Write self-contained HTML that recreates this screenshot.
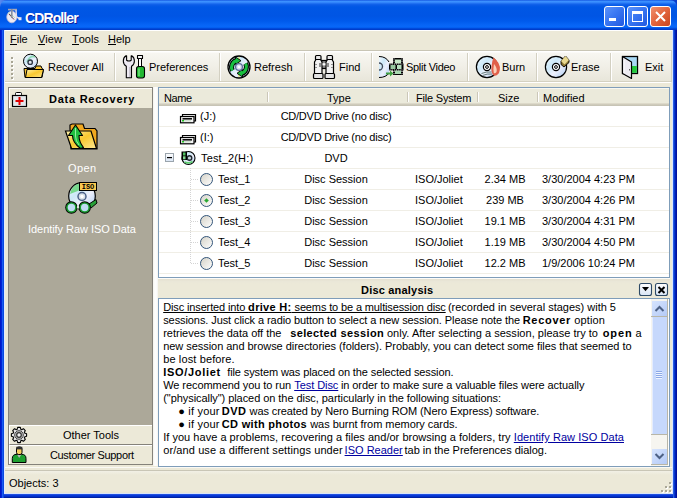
<!DOCTYPE html>
<html><head><meta charset="utf-8">
<style>
*{box-sizing:border-box}
html,body{margin:0;padding:0}
body{width:677px;height:498px;overflow:hidden;position:relative;background:#ECE9D8;font-family:"Liberation Sans",sans-serif;font-size:11px;color:#000;-webkit-font-smoothing:antialiased}
.a{position:absolute;white-space:nowrap}
#title{left:0;top:0;width:677px;height:30px;border-radius:7px 7px 0 0;
background:linear-gradient(to bottom,#0A46D9 0px,#3D93FF 1px,#3A8EFE 2px,#2A7BF6 3px,#1566EC 4px,#0B5CE8 5px,#0057E5 7px,#0055E4 16px,#005AEC 21px,#0765F6 25px,#0867F8 27px,#0058EA 28px,#003CCB 29px,#003CCB 30px)}
#fl{left:0;top:30px;width:5px;height:468px;background:linear-gradient(to right,#0018C8 0,#0018C8 1px,#0024D8 1px,#0024D8 2px,#1A5CF0 2px,#1A5CF0 3px,#0A48E0 3px,#0A48E0 4px,#E0EAFF 4px,#E0EAFF 5px)}
#fr{left:672px;top:30px;width:5px;height:468px;background:linear-gradient(to right,#D8E4FF 0,#D8E4FF 1px,#2A5CE0 1px,#2A5CE0 2px,#0838D0 2px,#0838D0 3px,#0020B0 3px,#0020B0 4px,#0010A0 4px)}
#fb{left:4px;top:493px;width:669px;height:5px;background:linear-gradient(to bottom,#D8E4F8 0,#D8E4F8 1px,#2050E0 1px,#2050E0 2px,#0838D8 2px,#0838D8 3px,#0030C8 3px,#0030C8 4px,#0020A0 4px)}
#fb2{left:0;top:494px;width:677px;height:4px;background:linear-gradient(to bottom,#2050E0 0,#2050E0 1px,#0838D8 1px,#0838D8 2px,#0030C8 2px,#0030C8 3px,#0020A0 3px)}
#corner{left:0;top:0;width:677px;height:10px;background:linear-gradient(to right,#5A8AF0 0,#2A62E0 8px,#0A46D9 16px,#0A46D9 660px,#0A3CC8 677px)}
.tt{left:25px;top:10px;color:#fff;font-weight:bold;font-size:14px;letter-spacing:-0.9px;text-shadow:1px 1px 0 #0A1FA0}
.tbtn{top:6px;width:21px;height:21px;border:1px solid #fff;border-radius:3px;background:linear-gradient(135deg,#5C93FA 0%,#3A77F2 45%,#2158E0 100%)}
.tbtn.x{background:linear-gradient(135deg,#F0906E 0%,#E2643D 50%,#C8451F 100%)}
#menu{left:4px;top:30px;width:669px;height:20px;border-top:1px solid #fff;background:#ECE9D8}
.m{top:33px}
.m u{text-decoration:none;border-bottom:1px solid #000;display:inline-block;line-height:9px;height:10px}
#tbar{left:4px;top:50px;width:668px;height:33px;border-top:1px solid #C8C5B5;background:linear-gradient(to bottom,#FFFFFF 0,#FFFFFF 1px,#F7F6F1 2px,#F1EFE7 50%,#E8E6DA 97%,#D4D1C1 97%);border-bottom:1px solid #FFFFFF;border-right:1px solid #D4D1C1}
.sep{top:53px;width:2px;height:28px;border-left:1px solid #D3D0C2;border-right:1px solid #FFFFFF}
.tl{top:61px}
#lp{left:8px;top:87px;width:145px;height:378px;border:1px solid #85827A;background:#ACA899}
.lph{left:9px;top:88px;width:143px;height:20px;background:#ECE9D8;border-top:1px solid #fff;border-left:1px solid #fff}
.lbar{width:143px;height:19px;background:#ECE9D8;border-top:1px solid #fff;border-left:1px solid #fff;left:9px}
.lt{color:#fff}
#split{left:153px;top:87px;width:5px;height:379px;background:linear-gradient(to right,#F3F2EA 0,#FBFBF8 1px,#FFFFFF 3px,#F4F3EE 5px)}
#lv{left:158px;top:87px;width:512px;height:191px;border:1px solid #7F9DB9;background:#fff}
.hdr{left:159px;top:88px;width:510px;height:18px;background:linear-gradient(to bottom,#F8F7F0 0,#F8F7F0 1px,#EBEADB 1px,#EBEADB 15px,#E3E0D0 15px,#D6D2C2 16px,#C7C4B5 17px)}
.hs{top:92px;width:2px;height:10px;border-left:1px solid #CBC7B8;border-right:1px solid #fff}
.rl{left:159px;width:510px;height:1px;background:#F0EEE6}
#ph{left:158px;top:278px;width:512px;height:20px;background:linear-gradient(to bottom,#FCFBF8 0,#FCFBF8 1px,#E6E2D2 1px,#E6E2D2 2px,#EAE7D8 3px,#ECE9D8 6px,#ECE9D8 100%)}
#tx{left:158px;top:298px;width:512px;height:169px;border:1px solid #7F9DB9;background:#fff}
.pt{left:164px;line-height:13px}
.pt a{color:#0000A0;text-decoration:underline}
.pt b{letter-spacing:0.45px}
#sb{left:651px;top:299px;width:17px;height:167px;background:#FDFDFB;border-left:1px solid #EEEDE5}
#status{left:4px;top:470px;width:669px;height:24px;border-top:1px solid #C9C6B6;background:linear-gradient(to bottom,#F2F0E6 0,#ECE9D8 4px,#ECE9D8 20px,#E4E1D1 23px)}
#wl{left:5px;top:467px;width:667px;height:1px;background:#FAF9F4}
</style></head><body>
<div id="corner" class="a"></div>
<div id="title" class="a"></div>
<div class="a tt">CDRoller</div>
<div class="a tbtn" style="left:604px"></div>
<div class="a tbtn" style="left:627px"></div>
<div class="a tbtn x" style="left:650px"></div>


<div id="menu" class="a"></div>
<div class="a m" style="left:10px"><u>F</u>ile</div>
<div class="a m" style="left:38px"><u>V</u>iew</div>
<div class="a m" style="left:72px"><u>T</u>ools</div>
<div class="a m" style="left:108px"><u>H</u>elp</div>

<div id="tbar" class="a"></div>
<div class="a sep" style="left:114px"></div>
<div class="a sep" style="left:219px"></div>
<div class="a sep" style="left:304px"></div>
<div class="a sep" style="left:371px"></div>
<div class="a sep" style="left:467px"></div>
<div class="a sep" style="left:536px"></div>
<div class="a sep" style="left:610px"></div>
<div class="a tl" style="left:48px">Recover All</div>
<div class="a tl" style="left:149px">Preferences</div>
<div class="a tl" style="left:254px">Refresh</div>
<div class="a tl" style="left:339px">Find</div>
<div class="a tl" style="left:406px;letter-spacing:-0.3px">Split Video</div>
<div class="a tl" style="left:502px">Burn</div>
<div class="a tl" style="left:571px">Erase</div>
<div class="a tl" style="left:645px">Exit</div>

<div id="lp" class="a"></div>
<div class="a lph"></div>
<div class="a" style="left:49px;top:93px;font-weight:bold;letter-spacing:0.75px">Data Recovery</div>
<div class="a lt" style="left:68px;top:162px;letter-spacing:0.4px">Open</div>
<div class="a lt" style="left:28px;top:223px;letter-spacing:-0.05px">Identify Raw ISO Data</div>
<div class="a lbar" style="top:425px;border-bottom:1px solid #85827A;height:20px"></div>
<div class="a lbar" style="top:445px"></div>
<div class="a" style="left:63px;top:429px">Other Tools</div>
<div class="a" style="left:50px;top:449px;letter-spacing:-0.35px">Customer Support</div>

<div id="split" class="a"></div>
<div id="lv" class="a"></div>
<div class="a hdr"></div>
<div class="a" style="left:164px;top:92px;letter-spacing:-0.4px">Name</div>
<div class="a" style="left:327px;top:92px">Type</div>
<div class="a" style="left:416px;top:92px;letter-spacing:-0.2px">File System</div>
<div class="a" style="left:498px;top:92px">Size</div>
<div class="a" style="left:543px;top:92px">Modified</div>
<div class="a hs" style="left:267px"></div>
<div class="a hs" style="left:407px"></div>
<div class="a hs" style="left:477px"></div>
<div class="a hs" style="left:537px"></div>
<div class="a" style="left:200px;top:110px">(J:)</div>
<div class="a" style="left:276px;width:120px;text-align:center;top:110px;letter-spacing:-0.25px">CD/DVD Drive (no disc)</div>
<div class="a rl" style="top:126px"></div>
<div class="a" style="left:200px;top:131px">(I:)</div>
<div class="a" style="left:276px;width:120px;text-align:center;top:131px;letter-spacing:-0.25px">CD/DVD Drive (no disc)</div>
<div class="a rl" style="top:147px"></div>
<div class="a" style="left:201px;top:152px;letter-spacing:0.15px">Test_2(H:)</div>
<div class="a" style="left:276px;width:120px;text-align:center;top:152px">DVD</div>
<div class="a rl" style="top:168px"></div>
<div class="a" style="left:218px;top:173px">Test_1</div>
<div class="a" style="left:276px;width:120px;text-align:center;top:173px">Disc Session</div>
<div class="a" style="left:415px;top:173px">ISO/Joliet</div>
<div class="a" style="left:465px;width:80px;text-align:center;top:173px">2.34 MB</div>
<div class="a" style="left:542px;top:173px">3/30/2004 4:23 PM</div>
<div class="a rl" style="top:189px"></div>
<div class="a" style="left:218px;top:194px">Test_2</div>
<div class="a" style="left:276px;width:120px;text-align:center;top:194px">Disc Session</div>
<div class="a" style="left:415px;top:194px">ISO/Joliet</div>
<div class="a" style="left:465px;width:80px;text-align:center;top:194px">239 MB</div>
<div class="a" style="left:542px;top:194px">3/30/2004 4:26 PM</div>
<div class="a rl" style="top:210px"></div>
<div class="a" style="left:218px;top:215px">Test_3</div>
<div class="a" style="left:276px;width:120px;text-align:center;top:215px">Disc Session</div>
<div class="a" style="left:415px;top:215px">ISO/Joliet</div>
<div class="a" style="left:465px;width:80px;text-align:center;top:215px">19.1 MB</div>
<div class="a" style="left:542px;top:215px">3/30/2004 4:31 PM</div>
<div class="a rl" style="top:231px"></div>
<div class="a" style="left:218px;top:236px">Test_4</div>
<div class="a" style="left:276px;width:120px;text-align:center;top:236px">Disc Session</div>
<div class="a" style="left:415px;top:236px">ISO/Joliet</div>
<div class="a" style="left:465px;width:80px;text-align:center;top:236px">1.19 MB</div>
<div class="a" style="left:542px;top:236px">3/30/2004 4:50 PM</div>
<div class="a rl" style="top:252px"></div>
<div class="a" style="left:218px;top:257px">Test_5</div>
<div class="a" style="left:276px;width:120px;text-align:center;top:257px">Disc Session</div>
<div class="a" style="left:415px;top:257px">ISO/Joliet</div>
<div class="a" style="left:465px;width:80px;text-align:center;top:257px">12.2 MB</div>
<div class="a" style="left:542px;top:257px">1/9/2006 10:24 PM</div>
<div class="a rl" style="top:273px"></div>
<div id="ph" class="a"></div>
<div class="a" style="left:361px;top:284px;font-weight:bold;letter-spacing:0.2px">Disc analysis</div>
<div id="tx" class="a"></div>
<div id="sb" class="a"></div>
<div class="a pt" style="top:301px;left:163.2px;letter-spacing:-0.133px"><u>Disc inserted into <b style="letter-spacing:0.317px">drive H:</b> seems to be a multisession disc</u></div>
<div class="a pt" style="top:301px;left:447.9px;letter-spacing:-0.001px">(recorded in several stages) with 5</div>
<div class="a pt" style="top:314px;left:163.2px;letter-spacing:-0.084px">sessions. Just click a radio button to select a new session. Please note the</div>
<div class="a pt" style="top:314px;left:522.7px;letter-spacing:0.248px"><b style="letter-spacing:0.698px">Recover</b></div>
<div class="a pt" style="top:314px;left:574.2px;letter-spacing:0.138px">option</div>
<div class="a pt" style="top:327px;left:163.2px;letter-spacing:-0.005px">retrieves the data off the</div>
<div class="a pt" style="top:327px;left:290.2px;letter-spacing:-0.078px"><b style="letter-spacing:0.372px">selected session</b></div>
<div class="a pt" style="top:327px;left:386.9px;letter-spacing:0.021px">only. After selecting a session, please try to</div>
<div class="a pt" style="top:327px;left:602.7px;letter-spacing:0.434px"><b style="letter-spacing:0.884px">open</b></div>
<div class="a pt" style="top:327px;left:635.5px;letter-spacing:0.328px">a</div>
<div class="a pt" style="top:340px;left:163.2px;letter-spacing:-0.043px">new session and browse directories (folders). Probably, you can detect some files that seemed to</div>
<div class="a pt" style="top:353px;left:163.2px;letter-spacing:0.126px">be lost before.</div>
<div class="a pt" style="top:366px;left:163.2px;letter-spacing:0.256px"><b style="letter-spacing:0.706px">ISO/Joliet</b></div>
<div class="a pt" style="top:366px;left:227.2px;letter-spacing:-0.104px">file system was placed on the selected session.</div>
<div class="a pt" style="top:379px;left:163.2px;letter-spacing:-0.07px">We recommend you to run</div>
<div class="a pt" style="top:379px;left:294.2px;letter-spacing:-0.057px"><a>Test Disc</a></div>
<div class="a pt" style="top:379px;left:340.9px;letter-spacing:-0.069px">in order to make sure a valuable files were actually</div>
<div class="a pt" style="top:392px;left:163.2px;letter-spacing:-0.059px">("physically") placed on the disc, particularly in the following situations:</div>
<div class="a pt" style="top:405px;left:178.2px;letter-spacing:0.205px">&#9679; if your</div>
<div class="a pt" style="top:405px;left:221.8px;letter-spacing:-0.026px"><b style="letter-spacing:0.424px">DVD</b></div>
<div class="a pt" style="top:405px;left:249.6px;letter-spacing:-0.1px">was created by Nero Burning ROM (Nero Express) software.</div>
<div class="a pt" style="top:418px;left:178.2px;letter-spacing:0.205px">&#9679; if your</div>
<div class="a pt" style="top:418px;left:221.8px;letter-spacing:-0.133px"><b style="letter-spacing:0.317px">CD with photos</b></div>
<div class="a pt" style="top:418px;left:310.2px;letter-spacing:-0.044px">was burnt from memory cards.</div>
<div class="a pt" style="top:431px;left:163.2px;letter-spacing:0.027px">If you have a problems, recovering a files and/or browsing a folders, try</div>
<div class="a pt" style="top:431px;left:513.8px;letter-spacing:0.065px"><a>Identify Raw ISO Data</a></div>
<div class="a pt" style="top:444px;left:163.2px;letter-spacing:0.1px">or/and use a different settings under</div>
<div class="a pt" style="top:444px;left:344.6px;letter-spacing:0.011px"><a>ISO Reader</a></div>
<div class="a pt" style="top:444px;left:404.5px;letter-spacing:-0.02px">tab in the Preferences dialog.</div>
<div id="wl" class="a"></div>
<div id="status" class="a"></div>
<div class="a" style="left:9px;top:477px">Objects: 3</div>
<div id="fb2" class="a"></div><div id="fl" class="a"></div><div id="fr" class="a"></div><div id="fb" class="a"></div>
<svg class="a" style="left:0;top:0" width="677" height="498" viewBox="0 0 677 498">
<defs>
<linearGradient id="cdg" x1="0" y1="0" x2="1" y2="1">
<stop offset="0" stop-color="#F4FAFF"/><stop offset="0.35" stop-color="#CCE8F8"/><stop offset="0.6" stop-color="#EEF0FC"/><stop offset="1" stop-color="#A4C8F0"/>
</linearGradient>
<linearGradient id="fold" x1="0" y1="0" x2="1" y2="1">
<stop offset="0" stop-color="#FFF4B0"/><stop offset="0.5" stop-color="#F8C830"/><stop offset="1" stop-color="#FFE890"/>
</linearGradient>
<linearGradient id="btnb" x1="0" y1="0" x2="0" y2="1">
<stop offset="0" stop-color="#FFFFFF"/><stop offset="1" stop-color="#D8E4F4"/>
</linearGradient>
<linearGradient id="sbb" x1="0" y1="0" x2="1" y2="1">
<stop offset="0" stop-color="#D6E4FE"/><stop offset="1" stop-color="#B4CAF6"/>
</linearGradient>
<linearGradient id="rad" x1="0" y1="0" x2="1" y2="1">
<stop offset="0" stop-color="#D4D1C6"/><stop offset="1" stop-color="#FFFFFF"/>
</linearGradient>
</defs>
<!-- title icon -->
<g>
<ellipse cx="11.8" cy="17" rx="5" ry="5.8" fill="#EEEAF2" stroke="#C8C0D8" stroke-width="0.8"/>
<path d="M8 12.5 Q10 15 12 15 L15 18" stroke="#C0E0C0" stroke-width="1" fill="none"/>
<path d="M9 14 L14 19.5" stroke="#703848" stroke-width="1"/>
<rect x="8" y="8.8" width="9" height="1.6" fill="#A8A8B8"/>
<rect x="11" y="9" width="1.6" height="9" fill="#8890A0"/>
<path d="M16 10 L16.5 17 L19.5 18.5" stroke="#E0DAE8" stroke-width="1.4" fill="none"/>
<rect x="18.5" y="17.2" width="3" height="3" fill="#E8E8F4"/>
</g>
<!-- title buttons glyphs -->
<rect x="609" y="18" width="7" height="3" fill="#fff"/>
<rect x="632.5" y="11.5" width="10" height="10" fill="none" stroke="#fff" stroke-width="1"/>
<rect x="632" y="11" width="11" height="3" fill="#fff"/>
<path d="M656 12 L665 21 M665 12 L656 21" stroke="#fff" stroke-width="2"/>
<!-- gripper -->
<g fill="#FFFFFF"><rect x="12" y="58" width="2" height="2"/><rect x="12" y="62" width="2" height="2"/><rect x="12" y="66" width="2" height="2"/><rect x="12" y="70" width="2" height="2"/><rect x="12" y="74" width="2" height="2"/><rect x="12" y="78" width="2" height="2"/></g>
<g fill="#A8A594"><rect x="11" y="57" width="2" height="2"/><rect x="11" y="61" width="2" height="2"/><rect x="11" y="65" width="2" height="2"/><rect x="11" y="69" width="2" height="2"/><rect x="11" y="73" width="2" height="2"/><rect x="11" y="77" width="2" height="2"/></g>

<!-- Recover All -->
<g stroke="#000" stroke-width="1">
<circle cx="30.5" cy="61.2" r="7" fill="url(#cdg)"/>
<path d="M27 62 Q30 55 35 57" stroke="#60D080" stroke-width="1.5" fill="none" opacity="0.6"/>
<circle cx="30.2" cy="62.2" r="2.2" fill="#E0E8F0" stroke="#303848" stroke-width="1.4"/>
<path d="M24 68.5 L35 68.5 L36 66 L41 66 L42 68.5 L43.5 69.5 L42 77.5 L25 77.5 Z" fill="#F6C030"/>
<path d="M27 69.5 L43.5 69.5 L41.5 77.5 L25.5 77.5 Z" fill="url(#fold)"/>
</g>
<!-- Preferences -->
<g stroke="#000" stroke-width="1.1" stroke-linejoin="round">
<path d="M126 55.8 Q123.3 57.5 123.3 61 Q123.3 64.5 126.3 66.3 L126.3 77.8 L131.5 77.8 L131.5 66.3 Q134.4 64.5 134.4 61 Q134.4 57.5 131.7 55.8 L131.2 55.8 L131.2 60.2 Q128.9 61.8 126.6 60.2 L126.6 55.8 Z" fill="#EEEAF2"/>
<path d="M130 67 L130 77" stroke="#B0A8B8" stroke-width="1.1"/>
<rect x="137.5" y="55.5" width="5" height="3" fill="#F4F4F4"/>
<rect x="138.5" y="58.5" width="3" height="8" fill="#FFFFFF" stroke-width="1"/>
<rect x="136.5" y="66.5" width="8" height="11.5" rx="2.2" fill="#22B832"/>
<path d="M139 68.5 L139 76" stroke="#80E888" stroke-width="1.2"/>
</g>
<!-- Refresh -->
<g>
<circle cx="239" cy="67" r="11" fill="url(#cdg)" stroke="#000" stroke-width="1.3"/>
<path d="M238.3 57 L239.7 57 L239.7 77 L238.3 77 Z" fill="#E8F070" opacity="0.9"/>
<path d="M232.4 70.5 A7 7 0 0 1 236.5 60.5" stroke="#000" stroke-width="5" fill="none"/>
<path d="M245.6 63.5 A7 7 0 0 1 241.5 73.5" stroke="#000" stroke-width="5" fill="none"/>
<path d="M235.5 57 L241 60.7 L235.5 64.5 Z" fill="#18C040" stroke="#000" stroke-width="0.9"/>
<path d="M242.5 77 L237 73.3 L242.5 69.5 Z" fill="#18C040" stroke="#000" stroke-width="0.9"/>
<path d="M232.4 70.5 A7 7 0 0 1 236.5 60.5" stroke="#18C040" stroke-width="3.2" fill="none"/>
<path d="M245.6 63.5 A7 7 0 0 1 241.5 73.5" stroke="#18C040" stroke-width="3.2" fill="none"/>
<circle cx="239" cy="67" r="3.4" fill="#D8E0F0" stroke="#5A6A98" stroke-width="1.3"/>
<circle cx="239" cy="67" r="1.3" fill="#fff"/>
</g>
<!-- Find (binoculars) -->
<g stroke="#000" stroke-width="1.2">
<rect x="320.5" y="60.5" width="7" height="8" fill="#8A8A8A"/>
<rect x="315.5" y="55.5" width="5.5" height="5" rx="1" fill="#E8E8E8"/>
<rect x="327" y="55.5" width="5.5" height="5" rx="1" fill="#E8E8E8"/>
<path d="M314.5 74 L314.5 62 L316 59.5 L320.5 59.5 L322 62 L322 74 Z" fill="#F2F2F2"/>
<path d="M326 74 L326 62 L327.5 59.5 L332 59.5 L333.5 62 L333.5 74 Z" fill="#F2F2F2"/>
<rect x="313.5" y="73.5" width="9.5" height="5" rx="1" fill="#E4E4E4"/>
<rect x="325" y="73.5" width="9.5" height="5" rx="1" fill="#E4E4E4"/>
</g>
<rect x="322.5" y="63.2" width="3" height="2.2" fill="#FFFFFF"/>
<g fill="#909090"><rect x="315" y="64" width="2" height="1"/><rect x="315" y="67" width="2" height="1"/><rect x="331" y="64" width="2" height="1"/><rect x="331" y="67" width="2" height="1"/><rect x="319" y="63" width="2" height="4"/><rect x="327" y="63" width="2" height="4"/></g>
<!-- Split Video -->
<g>
<path d="M379 56.5 Q386 56.5 389 62 L389 73 Q386 77.5 379 77.5 Z" fill="url(#cdg)"/>
<path d="M379 56.5 Q386 56.5 389 62 M389 73 Q386 77.5 379 77.5" stroke="#000" stroke-width="1" fill="none"/>
<path d="M379 63 A3.5 3.5 0 0 1 379 70" stroke="#404858" stroke-width="1.3" fill="none"/>
<rect x="393" y="58" width="10" height="17" fill="#000"/>
<rect x="395" y="59.5" width="6" height="4.5" fill="#C8E8C8"/>
<rect x="395" y="70" width="6" height="4" fill="#A8D8B0"/>
<rect x="389" y="63.5" width="14.5" height="7" fill="#000"/>
<rect x="390.5" y="65" width="5" height="4" fill="#98C8A0"/>
<rect x="397" y="65" width="4.5" height="4" fill="#B8E0C0"/>
<g stroke="#fff" stroke-width="1" stroke-dasharray="1 1.2">
<path d="M394 58.5 L394 63 M402 58.5 L402 63 M394 71 L394 75 M402 71 L402 75"/>
<path d="M389.5 64 L403 64 M389.5 70 L403 70"/>
</g>
<path d="M386 72.5 L390 72.5 L390 70.5 L393.5 73.5 L390 76.5 L390 74.5 L386 74.5 Z" fill="#40A040"/>
</g>
<!-- Burn -->
<g>
<circle cx="487" cy="67" r="10.6" fill="url(#cdg)" stroke="#000" stroke-width="1.2"/>
<path d="M493.5 57.5 Q500.8 63 499.8 70 Q499 75.8 494 75.8 Q490.5 73 491.5 66 Q492 61 493.5 57.5 Z" fill="#E0604A"/>
<path d="M494 64 Q497.5 68 496.5 72 Q495 74 493.8 73 Q493 69 494 64 Z" fill="#FAD0B8"/>
<circle cx="487" cy="67" r="3.6" fill="#fff" stroke="#000" stroke-width="1.2"/>
<circle cx="487" cy="67" r="1.4" fill="#fff" stroke="#000" stroke-width="1"/>
<path d="M481.5 73.5 Q486 71.5 491.5 72 M482.5 75.5 Q487 73.5 492 74" stroke="#607878" stroke-width="1" fill="none"/>
</g>
<!-- Erase -->
<g>
<circle cx="556" cy="67" r="10.6" fill="url(#cdg)" stroke="#000" stroke-width="1.2"/>
<circle cx="556" cy="67" r="3.6" fill="#fff" stroke="#000" stroke-width="1.2"/>
<circle cx="556" cy="67" r="1.4" fill="#fff" stroke="#000" stroke-width="1"/>
<path d="M561 61 L565.5 56 L569 60 L569 62.5 L564 67 L561 64.5 Z" fill="#8A7430" stroke="#000" stroke-width="0.9"/>
<path d="M561 61 L565.5 56 L569 60 L564.5 64.5 Z" fill="#E8D890"/>
</g>
<!-- Exit -->
<g>
<rect x="622.5" y="56.5" width="15" height="17" fill="#A8D8F4" stroke="#000" stroke-width="1.3"/>
<rect x="623.2" y="66" width="13.6" height="6.8" fill="#22C83A"/>
<path d="M622.5 56.5 L631.5 62 L631.5 78.5 L622.5 73.5 Z" fill="#EEECF2" stroke="#000" stroke-width="1.2" stroke-linejoin="round"/>
<path d="M624 60 L624 73" stroke="#FFFFFF" stroke-width="1"/>
<rect x="629" y="69" width="1" height="1.5" fill="#606060"/>
</g>
<!-- medkit -->
<g>
<rect x="15.5" y="92.5" width="6" height="3" rx="1" fill="#fff" stroke="#000" stroke-width="1"/>
<rect x="12.5" y="95.5" width="14" height="11" fill="#E4E8EC" stroke="#000" stroke-width="1.2"/>
<path d="M19.5 97 L19.5 105 M15.5 101 L23.5 101" stroke="#E00000" stroke-width="2"/>
</g>
<!-- Open folder -->
<g stroke="#000" stroke-width="1.2">
<path d="M70 128.5 L70 125 L72 124 L83 124 L84.5 128.5 L95 128.5 L97 131 L97 149 L71 149 Z" fill="#F0A820"/>
<path d="M65.5 131 L91 131 L96.5 148.5 L71.5 148.5 Z" fill="url(#fold)"/>
</g>
<path d="M75.5 125 L82.5 135.5 L79 135.5 Q79 142 83.5 147.5 L80.5 148.5 Q72.5 142.5 72.5 135.5 L68.5 135.5 Z" fill="#22C040" stroke="#000" stroke-width="1.1" stroke-linejoin="round"/>
<path d="M75.5 128 L75.5 136 Q75.5 141 79 145" stroke="#90F0A0" stroke-width="1" fill="none"/>
<!-- ISO icon -->
<g>
<circle cx="82" cy="196" r="13.3" fill="url(#cdg)" stroke="#000" stroke-width="1.2"/>
<path d="M79 183.5 L79 190.5 L70 194 Q71 186 79 183.5 Z" fill="#50D060" opacity="0.7"/>
<rect x="79.5" y="182.5" width="17" height="8" fill="#F8C850" stroke="#000" stroke-width="1"/>
<text x="88" y="189.2" font-size="7" font-weight="bold" text-anchor="middle" font-family="Liberation Mono" fill="#000">ISO</text>
<circle cx="82" cy="196.5" r="4" fill="#D8E0E8" stroke="#4A6088" stroke-width="1.5"/>
<circle cx="82" cy="196.5" r="1.7" fill="#fff"/>
<path d="M89 204 L96 199.5 L97 203 L91 208" fill="#28A038" stroke="#000" stroke-width="1"/>
<circle cx="71.4" cy="207.5" r="6.2" fill="#000"/>
<circle cx="84.7" cy="207.5" r="6.2" fill="#000"/>
<circle cx="71.4" cy="207.5" r="5.3" fill="#1A9A30"/>
<circle cx="84.7" cy="207.5" r="5.3" fill="#1A9A30"/>
<circle cx="71.4" cy="207.5" r="3.7" fill="#C0DCF4"/>
<circle cx="84.7" cy="207.5" r="3.7" fill="#C0DCF4"/>
<rect x="77" y="205.5" width="2" height="3" fill="#E0E0E0"/>
</g>
<!-- gear -->
<g>
<path d="M24.58 433.09 L26.59 433.68 L26.59 436.32 L24.58 436.91 L24.30 437.60 L25.30 439.43 L23.43 441.30 L21.60 440.30 L20.91 440.58 L20.32 442.59 L17.68 442.59 L17.09 440.58 L16.40 440.30 L14.57 441.30 L12.70 439.43 L13.70 437.60 L13.42 436.91 L11.41 436.32 L11.41 433.68 L13.42 433.09 L13.70 432.40 L12.70 430.57 L14.57 428.70 L16.40 429.70 L17.09 429.42 L17.68 427.41 L20.32 427.41 L20.91 429.42 L21.60 429.70 L23.43 428.70 L25.30 430.57 L24.30 432.40 Z" fill="#E4E4E4" stroke="#000" stroke-width="1.1" stroke-linejoin="round"/>
<circle cx="19" cy="435" r="4.3" fill="#C8C8C8" stroke="#404040" stroke-width="1"/>
<circle cx="19" cy="435" r="2.3" fill="#F0F0F0" stroke="#303030" stroke-width="1.2"/>
</g>
<!-- person -->
<g>
<path d="M12.3 462.5 L12.3 458.5 Q12.3 454.3 17 454.3 L21.5 454.3 Q26 454.3 26 458.5 L26 462.5 Z" fill="#1EA030" stroke="#000" stroke-width="1"/>
<path d="M17 454.5 L19.2 458 L21.4 454.5 Z" fill="#B8B8B8"/>
<rect x="16.5" y="447" width="5.5" height="7.5" rx="2" fill="#F8D060" stroke="#000" stroke-width="1"/>
<rect x="16.3" y="446.8" width="6" height="2.6" fill="#303030"/>
</g>
<!-- drives -->
<g stroke="#000" stroke-width="1.2">
<path d="M182.5 116 L182.5 114.5 L195.5 114.5 L195.5 121 L194 121" fill="#F0F0F0"/>
<rect x="180.5" y="116.5" width="13.5" height="6.3" fill="#F4F4F4"/>
<path d="M182.5 118.8 L192 118.8" stroke-width="1.5"/>
</g>
<rect x="182" y="120" width="2" height="1.5" fill="#20C020"/><rect x="184" y="120.3" width="7" height="1" fill="#C0D8C0"/>
<g stroke="#000" stroke-width="1.2">
<path d="M182.5 137 L182.5 135.5 L195.5 135.5 L195.5 142 L194 142" fill="#F0F0F0"/>
<rect x="180.5" y="137.5" width="13.5" height="6.3" fill="#F4F4F4"/>
<path d="M182.5 139.8 L192 139.8" stroke-width="1.5"/>
</g>
<rect x="182" y="141" width="2" height="1.5" fill="#20C020"/><rect x="184" y="141.3" width="7" height="1" fill="#C0D8C0"/>
<!-- tree -->
<rect x="165.5" y="153.5" width="8" height="8" fill="url(#btnb)" stroke="#9AA4AC" stroke-width="1"/>
<rect x="167" y="157" width="5" height="1.2" fill="#000"/>
<circle cx="188.5" cy="158" r="6.5" fill="url(#cdg)" stroke="#000" stroke-width="1.1"/>
<circle cx="189.5" cy="158" r="2.3" fill="#C8D4DC" stroke="#202830" stroke-width="1.4"/>
<path d="M184.5 162 Q188.5 164 192.5 161.5" stroke="#60D070" stroke-width="1.6" fill="none"/>
<rect x="181.5" y="151.5" width="5.5" height="8.5" fill="#000"/>
<rect x="183" y="152.5" width="2.5" height="3" fill="#50C060"/><rect x="183" y="156.3" width="2.5" height="3" fill="#80D890"/>
<g stroke="#D4D4D4" stroke-width="1" stroke-dasharray="1 1">
<path d="M190.5 168 L190.5 263"/>
<path d="M191 179.5 L199 179.5 M191 200.5 L199 200.5 M191 221.5 L199 221.5 M191 242.5 L199 242.5 M191 263.5 L199 263.5"/>
</g>
<!-- radios -->
<g stroke="#33557A" stroke-width="1" fill="url(#rad)">
<circle cx="206.5" cy="179.5" r="6"/>
<circle cx="206.5" cy="200.5" r="6"/>
<circle cx="206.5" cy="221.5" r="6"/>
<circle cx="206.5" cy="242.5" r="6"/>
<circle cx="206.5" cy="263.5" r="6"/>
</g>
<path d="M206.5 198.2 L208.8 200.5 L206.5 202.8 L204.2 200.5 Z" fill="#28A830"/>
<!-- panel buttons -->
<rect x="639.5" y="283.5" width="12" height="12" rx="2" fill="url(#btnb)" stroke="#2E4A66" stroke-width="1.1"/>
<path d="M642 287 L649 287 L645.5 291.3 Z" fill="#000"/>
<rect x="655.5" y="283.5" width="12" height="12" rx="2" fill="url(#btnb)" stroke="#2E4A66" stroke-width="1.1"/>
<path d="M658.5 287 L664.5 293 M664.5 287 L658.5 293" stroke="#000" stroke-width="2"/>
<!-- scrollbar -->
<rect x="651" y="299" width="17" height="167" fill="#F6F5F0"/>
<path d="M667.5 299 L667.5 465" stroke="#B8B6A8" stroke-width="1"/>
<path d="M651 316.5 L668 316.5 M651 434.5 L668 434.5 M651 464.5 L668 464.5" stroke="#B8B6A8" stroke-width="1"/>
<rect x="652" y="301" width="15" height="15" fill="url(#sbb)"/>
<path d="M655.5 311 L659.5 307 L663.5 311" stroke="#4D6185" stroke-width="2" fill="none"/>
<rect x="652" y="317" width="15" height="117" fill="#C6D8FC"/>
<path d="M652.5 317.5 L652.5 433.5" stroke="#E4ECFE" stroke-width="1"/>
<g stroke="#8CA8E6" stroke-width="1"><path d="M656 371.5 L662 371.5 M656 373.5 L662 373.5 M656 375.5 L662 375.5 M656 377.5 L662 377.5"/></g>
<g stroke="#EEF4FF" stroke-width="1"><path d="M656 372.5 L662 372.5 M656 374.5 L662 374.5 M656 376.5 L662 376.5 M656 378.5 L662 378.5"/></g>
<rect x="652" y="449" width="15" height="15" fill="url(#sbb)"/>
<path d="M655.5 454 L659.5 458 L663.5 454" stroke="#4D6185" stroke-width="2" fill="none"/>
<!-- resize grip -->
<g fill="#FFFFFF"><rect x="670" y="483" width="2" height="2"/><rect x="666" y="487" width="2" height="2"/><rect x="670" y="487" width="2" height="2"/><rect x="662" y="491" width="2" height="2"/><rect x="666" y="491" width="2" height="2"/><rect x="670" y="491" width="2" height="2"/></g>
<g fill="#A9A797"><rect x="669" y="482" width="2" height="2"/><rect x="665" y="486" width="2" height="2"/><rect x="669" y="486" width="2" height="2"/><rect x="661" y="490" width="2" height="2"/><rect x="665" y="490" width="2" height="2"/><rect x="669" y="490" width="2" height="2"/></g>

</svg>
</body></html>
